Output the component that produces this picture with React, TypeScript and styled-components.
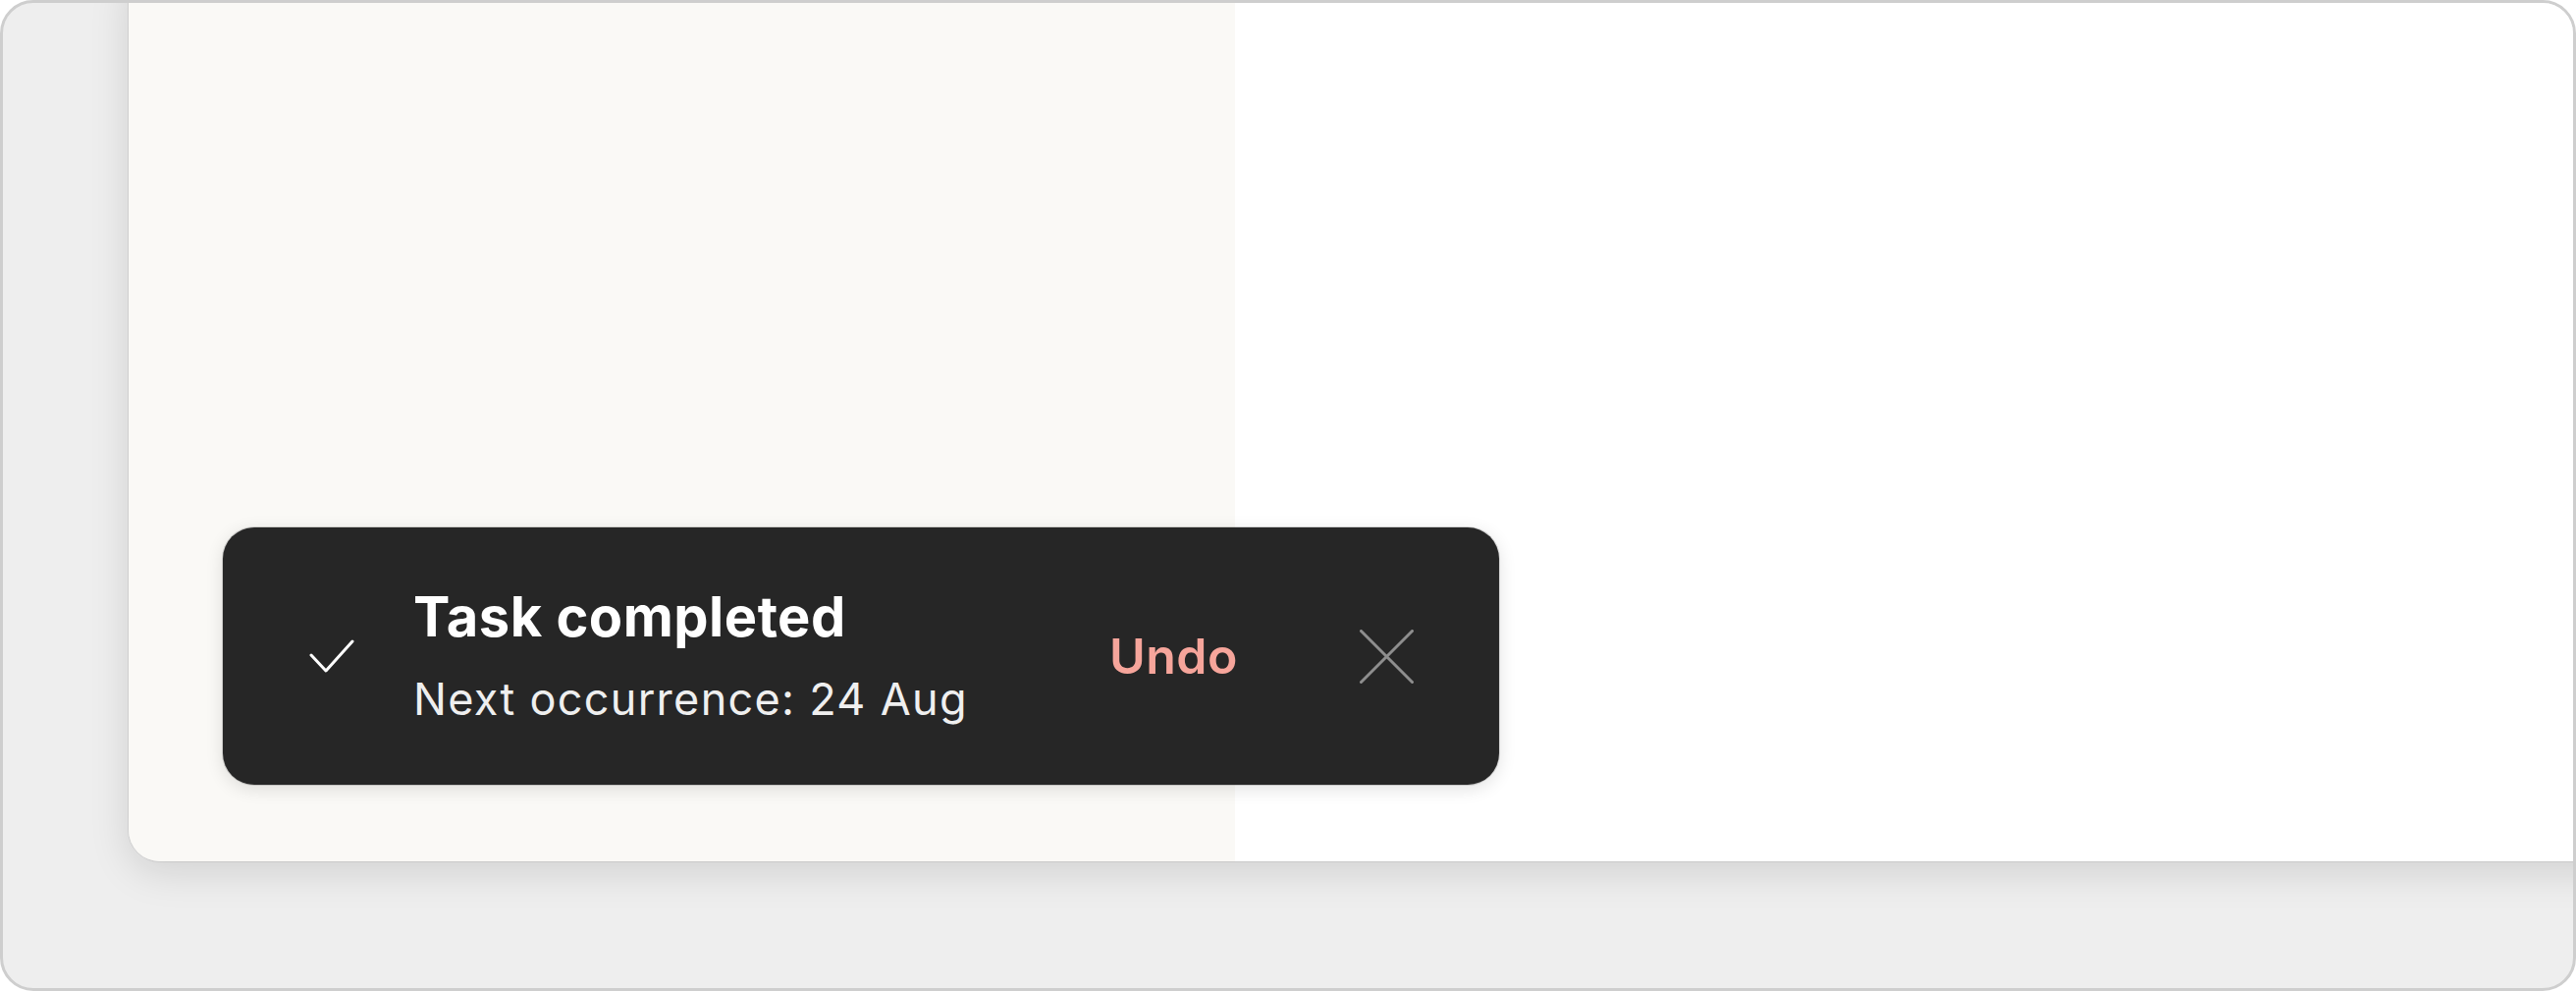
import React from 'react';
import styled, { createGlobalStyle } from 'styled-components';

const GlobalStyle = createGlobalStyle`
  html, body {
    margin: 0;
    padding: 0;
    background: #ffffff;
    font-family: Inter, "Noto Sans", sans-serif;
  }
  * {
    box-sizing: border-box;
  }
`;

const Frame = styled.div`
  width: 100vw;
  height: 100vh;
  border: 3px solid #cecece;
  border-radius: 34px;
  background: #eeeeee;
  overflow: hidden;
  display: flex;
  align-items: flex-start;
  padding-left: 128px;
`;

const Window = styled.div`
  position: relative;
  flex: 0 0 auto;
  width: 2600px;
  height: 914px;
  margin-top: -40px;
  border-radius: 32px;
  display: flex;
  overflow: hidden;
  box-shadow: 0 0 0 1px rgba(0, 0, 0, 0.07), 0 10px 40px rgba(0, 0, 0, 0.13);
`;

const Sidebar = styled.aside`
  width: 1127px;
  height: 100%;
  background: #faf9f6;
`;

const Main = styled.main`
  flex: 1;
  height: 100%;
  background: #ffffff;
`;

const Toast = styled.div`
  position: absolute;
  left: 96px;
  bottom: 78px;
  width: 1300px;
  height: 262px;
  border-radius: 32px;
  background: #262626;
  box-shadow: 0 0 0 1px rgba(0, 0, 0, 0.14), 0 4px 18px rgba(0, 0, 0, 0.12);
  display: flex;
  align-items: center;
  padding: 0 87px 0 88px;
`;

const CheckIcon = styled.svg`
  flex: 0 0 auto;
  width: 46px;
  height: 34px;
  margin-right: 60px;
`;

const TextBlock = styled.div`
  flex: 1;
  display: flex;
  flex-direction: column;
`;

const Title = styled.div`
  color: #ffffff;
  font-size: 56px;
  line-height: 64px;
  font-weight: 700;
  letter-spacing: 0.5px;
`;

const Subtitle = styled.div`
  margin-top: 24px;
  color: #efefef;
  font-size: 45px;
  line-height: 56px;
  font-weight: 400;
  letter-spacing: 1.3px;
`;

const UndoButton = styled.button`
  border: none;
  background: transparent;
  padding: 0;
  font-family: Inter, "Noto Sans", sans-serif;
  font-size: 50px;
  line-height: 50px;
  font-weight: 600;
  letter-spacing: 0.5px;
  color: #f6a59b;
  cursor: pointer;
`;

const CloseButton = styled.button`
  border: none;
  background: transparent;
  padding: 0;
  margin-left: 124px;
  width: 55px;
  height: 55px;
  display: flex;
  cursor: pointer;
`;

export default function App() {
  return (
    <>
      <GlobalStyle />
      <Frame>
        <Window>
          <Sidebar />
          <Main />
          <Toast>
            <CheckIcon viewBox="0 0 46 34">
              <polyline
                points="2,16 17,32 44,2"
                fill="none"
                stroke="#ffffff"
                strokeWidth="3"
                strokeLinecap="round"
                strokeLinejoin="round"
              />
            </CheckIcon>
            <TextBlock>
              <Title>Task completed</Title>
              <Subtitle>Next occurrence: 24 Aug</Subtitle>
            </TextBlock>
            <UndoButton>Undo</UndoButton>
            <CloseButton aria-label="Close">
              <svg width="55" height="55" viewBox="0 0 55 55">
                <path
                  d="M1.5 1.5 L53.5 53.5 M53.5 1.5 L1.5 53.5"
                  stroke="#8e8e8e"
                  strokeWidth="3"
                  strokeLinecap="round"
                />
              </svg>
            </CloseButton>
          </Toast>
        </Window>
      </Frame>
    </>
  );
}
